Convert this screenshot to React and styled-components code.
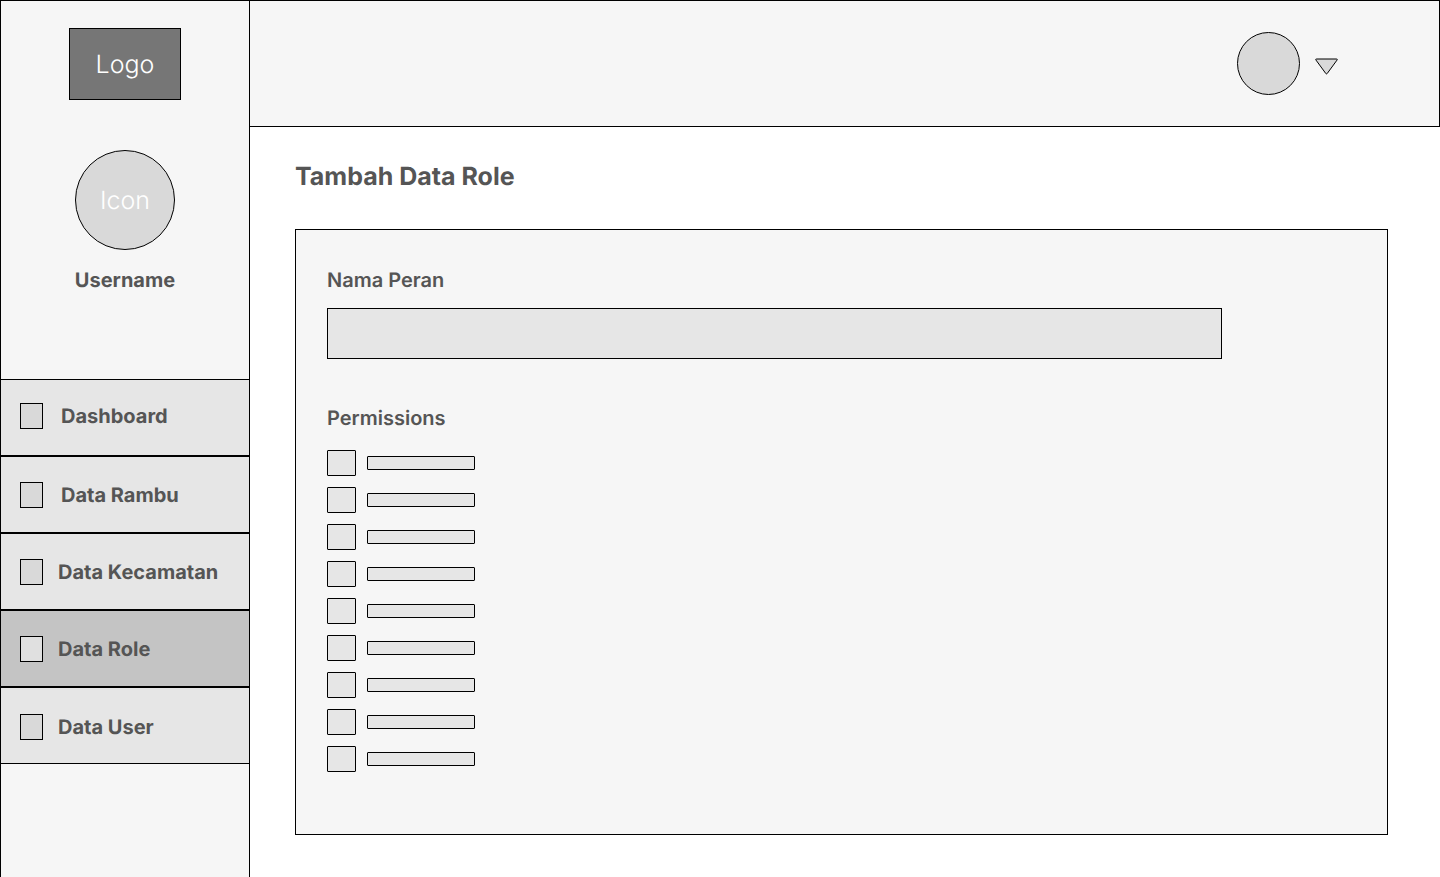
import React from 'react';
import styled, { createGlobalStyle } from 'styled-components';

const GlobalStyle = createGlobalStyle`
  * {
    box-sizing: border-box;
  }

  body {
    margin: 0;
    background: #fff;
    font-family: Inter, "Liberation Sans", sans-serif;
    text-rendering: geometricPrecision;
    -webkit-font-smoothing: antialiased;
    overflow: hidden;
  }
`;

const Page = styled.div`
  display: flex;
  height: 877px;
`;

const Sidebar = styled.aside`
  width: 250px;
  flex-shrink: 0;
  background: #f6f6f6;
  border: 1px solid #000;
  border-bottom: none;
`;

const Profile = styled.div`
  height: 378px;
  padding-top: 27px;
  display: flex;
  flex-direction: column;
  align-items: center;
`;

const Logo = styled.div`
  width: 112px;
  height: 72px;
  padding-top: 2px;
  display: flex;
  align-items: center;
  justify-content: center;
  background: #767676;
  border: 1px solid #000;
  color: #fff;
  font-size: 25px;
  font-weight: 300;
`;

const ProfileIcon = styled.div`
  width: 100px;
  height: 100px;
  margin-top: 50px;
  padding-top: 2px;
  display: flex;
  align-items: center;
  justify-content: center;
  border-radius: 50%;
  background: #d9d9d9;
  border: 1px solid #000;
  color: #fff;
  font-size: 25px;
  font-weight: 300;
`;

const Username = styled.div`
  margin-top: 18px;
  line-height: 24px;
  font-size: 20px;
  font-weight: 700;
  color: #555;
`;

const Nav = styled.nav`
  margin: 0 -1px;
`;

const NavItem = styled.a`
  height: 77px;
  display: flex;
  align-items: center;
  gap: ${(p) => p.$gap}px;
  padding: ${(p) => p.$top}px 0 ${(p) => p.$bottom}px 19px;
  background: ${(p) => (p.$active ? '#c4c4c4' : '#e6e6e6')};
  border: 1px solid #000;
  color: #555;
  font-size: 20px;
  font-weight: 700;
`;

const NavIcon = styled.span`
  width: 23px;
  height: 26px;
  flex-shrink: 0;
  background: ${(p) => (p.$active ? '#e0e0e0' : '#d9d9d9')};
  border: 1px solid #000;
`;

const Main = styled.div`
  flex: 1;
  min-width: 0;
  display: flex;
  flex-direction: column;
`;

const Header = styled.header`
  height: 127px;
  display: flex;
  align-items: center;
  justify-content: flex-end;
  gap: 15px;
  padding-right: 101px;
  background: #f6f6f6;
  border: 1px solid #000;
  border-left: none;
`;

const Avatar = styled.div`
  width: 63px;
  height: 63px;
  border-radius: 50%;
  background: #d9d9d9;
  border: 1px solid #000;
`;

const Caret = styled.svg`
  width: 23px;
  height: 17px;
  margin-top: 5px;
  display: block;
`;

const Content = styled.main`
  padding: 34px 0 0 45px;
`;

const Title = styled.h1`
  margin: 0 0 36px;
  line-height: 32px;
  font-size: 25px;
  font-weight: 700;
  color: #555;
`;

const Card = styled.form`
  width: 1093px;
  height: 606px;
  padding: 38px 31px 0;
  background: #f6f6f6;
  border: 1px solid #000;
`;

const Label = styled.div`
  line-height: 24px;
  font-size: 20px;
  font-weight: 600;
  color: #555;
`;

const NameInput = styled.input`
  display: block;
  width: 895px;
  height: 51px;
  margin: 16px 0 47px;
  background: #e6e6e6;
  border: 1px solid #000;
  border-radius: 0;
  outline: none;
`;

const PermissionList = styled.div`
  margin-top: 20px;
  display: flex;
  flex-direction: column;
  gap: 11px;
`;

const PermissionRow = styled.label`
  display: flex;
  align-items: center;
  gap: 11px;
`;

const Checkbox = styled.input`
  appearance: none;
  width: 29px;
  height: 26px;
  margin: 0;
  background: #e6e6e6;
  border: 1px solid #000;
  border-radius: 1px;
`;

const PermissionBar = styled.span`
  width: 108px;
  height: 14px;
  background: #e6e6e6;
  border: 1px solid #000;
  border-radius: 1px;
`;

const menu = [
  { label: 'Dashboard', gap: 18, top: 0, bottom: 3 },
  { label: 'Data Rambu', gap: 18, top: 1, bottom: 0 },
  { label: 'Data Kecamatan', gap: 15, top: 1, bottom: 0 },
  { label: 'Data Role', gap: 15, top: 1, bottom: 0, active: true },
  { label: 'Data User', gap: 15, top: 3, bottom: 0 },
];

const permissions = Array.from({ length: 9 }, (_, i) => i);

const App = () => (
  <>
    <GlobalStyle />
    <Page>
      <Sidebar>
        <Profile>
          <Logo>Logo</Logo>
          <ProfileIcon>Icon</ProfileIcon>
          <Username>Username</Username>
        </Profile>
        <Nav>
          {menu.map((item) => (
            <NavItem
              key={item.label}
              $gap={item.gap}
              $top={item.top}
              $bottom={item.bottom}
              $active={item.active}
            >
              <NavIcon $active={item.active} />
              {item.label}
            </NavItem>
          ))}
        </Nav>
      </Sidebar>
      <Main>
        <Header>
          <Avatar />
          <Caret viewBox="0 0 23 17">
            <path
              d="M1.5 1 H21.5 Q22.8 1 22 2.1 L12.2 15.5 Q11.5 16.3 10.8 15.5 L1 2.1 Q0.2 1 1.5 1 Z"
              fill="#d9d9d9"
              stroke="#000"
              strokeWidth="1"
            />
          </Caret>
        </Header>
        <Content>
          <Title>Tambah Data Role</Title>
          <Card>
            <Label>Nama Peran</Label>
            <NameInput type="text" />
            <Label>Permissions</Label>
            <PermissionList>
              {permissions.map((id) => (
                <PermissionRow key={id}>
                  <Checkbox type="checkbox" />
                  <PermissionBar />
                </PermissionRow>
              ))}
            </PermissionList>
          </Card>
        </Content>
      </Main>
    </Page>
  </>
);

export default App;
